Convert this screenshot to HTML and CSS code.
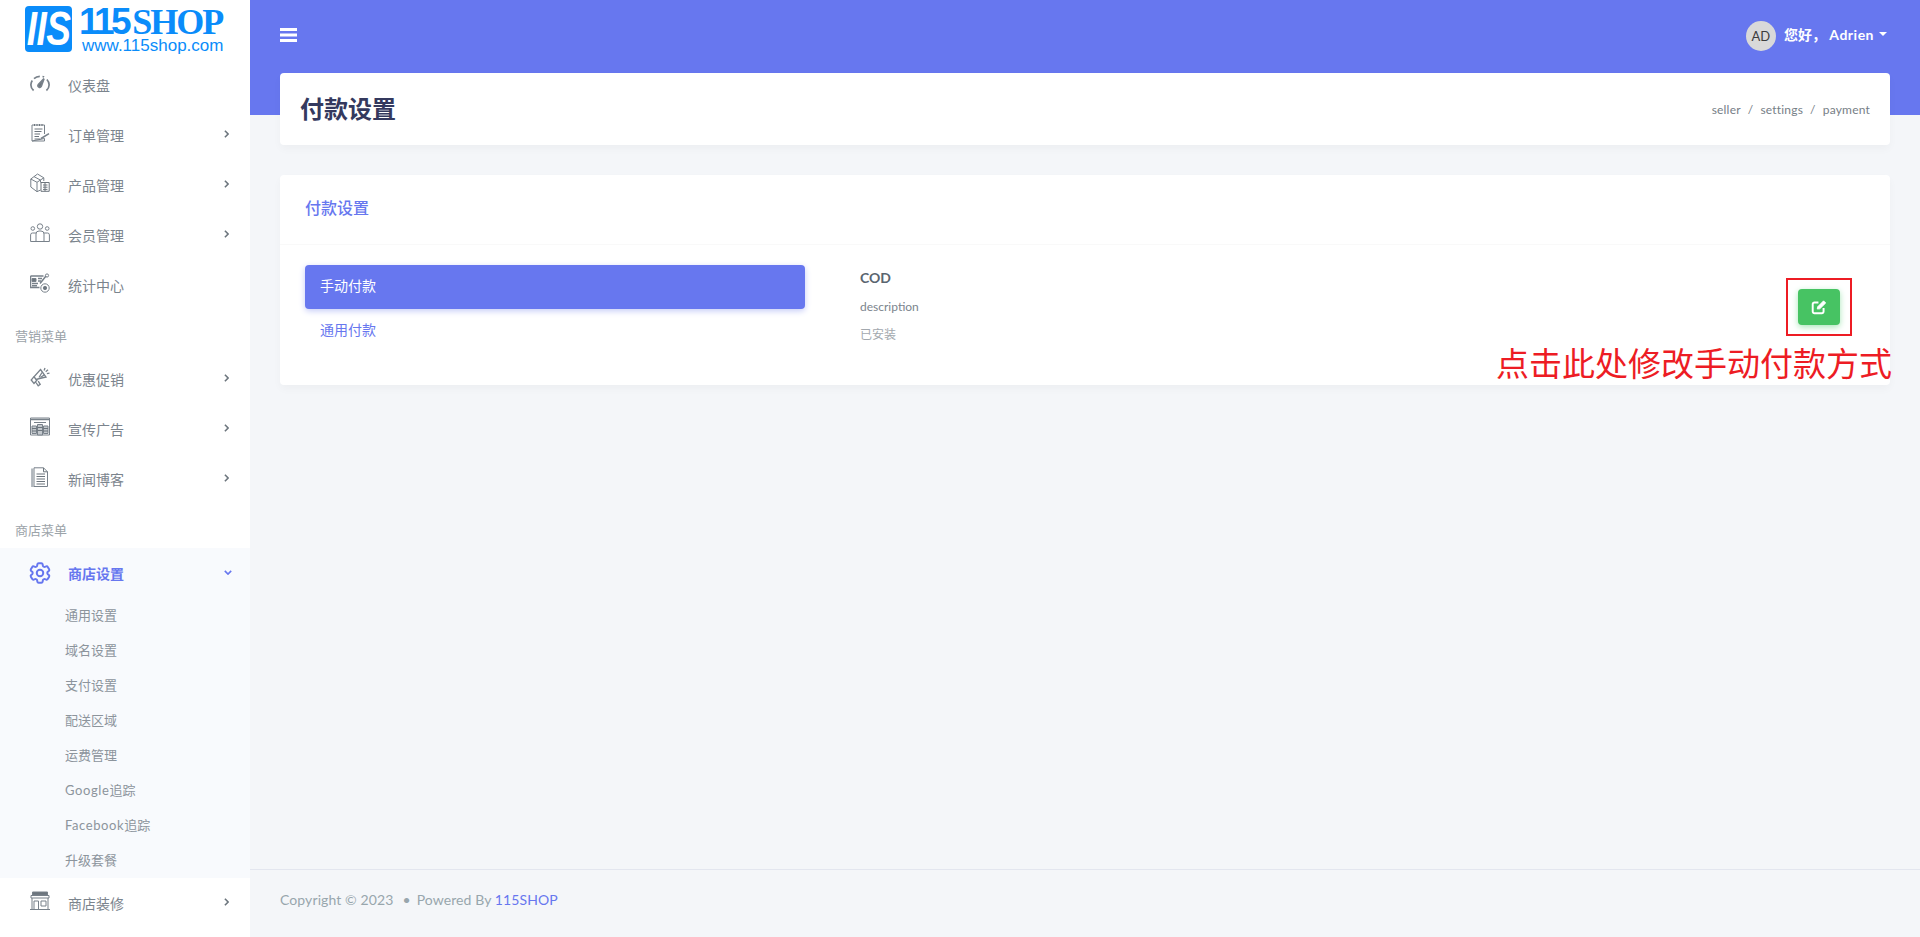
FILE: index.html
```html
<!DOCTYPE html>
<html lang="zh">
<head>
<meta charset="utf-8">
<title>付款设置</title>
<link rel="stylesheet" href="styles.css">
</head>
<body>
<div class="app">
  <aside class="sidebar">
    <div class="brand">
      <span class="brand-mark"><span class="brand-mark-text">IIS</span></span>
      <span class="brand-words">
        <span class="brand-name"><span class="brand-num">115</span><span class="brand-shop">SHOP</span></span>
        <span class="brand-url">www.115shop.com</span>
      </span>
    </div>
    <nav class="menu">
      <a class="item"><svg class="ico ico-gauge" viewBox="0 0 20 20"><path d="M3.600 17.500C1.700 15.800.8 13.900.9 11.600c.1-1.500.6-2.900 1.400-4"/><path d="M4 5.700C5.500 4.300 7.500 3.400 9.800 3.300M12.500 3.500c.6.100 1.100.3 1.600.6"/><path d="M16.900 6.500c1.300 1.400 2.100 3.100 2.200 5.100.1 2.300-.8 4.200-2.700 5.900"/><path d="M8.300 11.600 14 5.600l-2.800 7.800a1.700 1.700 0 0 1-2.900-1.800z" class="fill"/></svg><span class="label">仪表盘</span></a>
      <a class="item"><svg class="ico" viewBox="0 0 20 20"><path d="M2 2h12.500v9M14.500 15.500V18H2zM2 2v16"/><path d="M4.500 1v2M7 1v2M9.500 1v2M12 1v2M4.500 6h8M4.500 8.500h7M4.500 11h5.500M4.500 13.500h4.500M4.500 16h6" class="dark"/><path d="M11 15.500l8-4.800" class="thick"/></svg><span class="label">订单管理</span><svg class="chev" viewBox="0 0 6 10"><path d="M1 1l4 4-4 4"/></svg></a>
      <a class="item"><svg class="ico" viewBox="0 0 20 20"><path d="M.8 6l6.700-5 6.300 3.800L7 9.300zM.8 6v8l6.200 4.700V9.300M13.800 4.800V8M7 18.700l3.500-1.700"/><path d="M4 3.600l6.500 3.500v2.500"/><path d="M11 9.500h8.200v8.800H11zM13 12h4.500M13 14.200h4.500M13 16.400h4.500M15 9.500v8.800" class="dark"/></svg><span class="label">产品管理</span><svg class="chev" viewBox="0 0 6 10"><path d="M1 1l4 4-4 4"/></svg></a>
      <a class="item"><svg class="ico" viewBox="0 0 20 20"><circle cx="10" cy="3.500" r="2.700"/><circle cx="2.800" cy="5.500" r="1.800"/><circle cx="17.200" cy="5.500" r="1.800"/><path d="M6 18.500v-7.500a3 3 0 0 1 3-3h2a3 3 0 0 1 3 3v7.500zM6 10H2.500A1.900 1.900 0 0 0 .6 11.900v6.600H6M14 10h3.500a1.900 1.900 0 0 1 1.900 1.900v6.600H14"/></svg><span class="label">会员管理</span><svg class="chev" viewBox="0 0 6 10"><path d="M1 1l4 4-4 4"/></svg></a>
      <a class="item"><svg class="ico" viewBox="0 0 20 20"><path d="M.5 3h13M.5 3v11.500h9" class="thick"/><path d="M2 5.500h4v3H2z" class="fill"/><path d="M2 10.500h6M2 12.700h5M8 5.500h4M8 8h3" class="thick"/><path d="M10 10.500l6-7.500" class="thick"/><circle cx="17" cy="2.500" r="1.600"/><circle cx="15" cy="15" r="4.200"/><circle cx="15" cy="15" r="1.700" class="fill"/></svg><span class="label">统计中心</span></a>

      <div class="group">营销菜单</div>
      <a class="item"><svg class="ico ico-horn" viewBox="0 0 20 20"><path d="M10.500 2.500l5.500 7.500-10 2.500-2-2.800z"/><path d="M4 9.700 1.200 13 4 16.500l3.500-4M6 15.500l2.200 3.300 2-1.500-2-3.200"/><path d="M12 5.500l-3 5M14 8l-3.500 2.500"/><path d="M15 1l-.9 2.400M18 2.800l-2.300 1.900M19.500 6.200l-2.600.4"/></svg><span class="label">优惠促销</span><svg class="chev" viewBox="0 0 6 10"><path d="M1 1l4 4-4 4"/></svg></a>
      <a class="item"><svg class="ico" viewBox="0 0 20 20"><path d="M.5 1h19v17H.5z"/><path d="M.5 2.500h19" class="thick"/><path d="M4 5.500h12"/><path d="M2 9h4.500v7.500H2zM7.500 7.500h5V18h-5zM13.500 9H18v7.500h-4.500z" class="fill-soft"/><path d="M2 11.500h4.500M2 14h4.500M7.500 10.500h5M7.500 13.500h5M13.500 11.500H18M13.500 14H18" class="dark"/></svg><span class="label">宣传广告</span><svg class="chev" viewBox="0 0 6 10"><path d="M1 1l4 4-4 4"/></svg></a>
      <a class="item"><svg class="ico" viewBox="0 0 20 20"><path d="M4 .8h9.500l4 4V19.500H4z"/><path d="M3.500 2.500H2.200V19.500H4" class="thick-soft"/><path d="M13.500.8v4h4M6.500 7h8.500M6.500 9.500h8.500M6.500 12h8.500M6.500 14.500h8.500M6.500 17h8.500" class="dark"/></svg><span class="label">新闻博客</span><svg class="chev" viewBox="0 0 6 10"><path d="M1 1l4 4-4 4"/></svg></a>

      <div class="group">商店菜单</div>
      <div class="open">
        <a class="item item-active"><svg class="ico ico-gear" viewBox="0 0 24 24"><path d="M9.594 3.940c.09-.542.56-.94 1.110-.94h2.593c.55 0 1.020.398 1.110.94l.213 1.281c.063.374.313.686.645.87.074.04.147.083.22.127.325.196.72.257 1.075.124l1.217-.456a1.125 1.125 0 0 1 1.370.49l1.296 2.247a1.125 1.125 0 0 1-.26 1.431l-1.003.827c-.293.24-.438.613-.431.992a6.759 6.759 0 0 1 0 .255c-.007.378.138.75.43.99l1.005.828c.424.35.534.954.26 1.430l-1.298 2.247a1.125 1.125 0 0 1-1.369.491l-1.217-.456c-.355-.133-.75-.072-1.076.124a6.570 6.570 0 0 1-.22.128c-.331.183-.581.495-.644.869l-.213 1.280c-.09.543-.56.941-1.110.941h-2.594c-.55 0-1.020-.398-1.110-.94l-.213-1.281c-.062-.374-.312-.686-.644-.87a6.520 6.520 0 0 1-.22-.127c-.325-.196-.72-.257-1.076-.124l-1.217.456a1.125 1.125 0 0 1-1.369-.49l-1.297-2.247a1.125 1.125 0 0 1 .26-1.431l1.004-.827c.292-.24.437-.613.43-.992a6.932 6.932 0 0 1 0-.255c.007-.378-.138-.75-.43-.99l-1.004-.828a1.125 1.125 0 0 1-.26-1.430l1.297-2.247a1.125 1.125 0 0 1 1.370-.491l1.216.456c.356.133.751.072 1.076-.124.072-.044.146-.087.22-.128.332-.183.582-.495.644-.869l.214-1.281z"/><circle cx="12" cy="12" r="3"/></svg><span class="label">商店设置</span><svg class="chev chev-down" viewBox="0 0 10 6"><path d="M1 1l4 4 4-4"/></svg></a>
        <a class="sub">通用设置</a>
        <a class="sub">域名设置</a>
        <a class="sub">支付设置</a>
        <a class="sub">配送区域</a>
        <a class="sub">运费管理</a>
        <a class="sub"><span class="sub-en">Google</span>追踪</a>
        <a class="sub"><span class="sub-en">Facebook</span>追踪</a>
        <a class="sub">升级套餐</a>
      </div>
      <a class="item"><svg class="ico" viewBox="0 0 20 20"><path d="M2.500 1h15v3h-15z" class="fill"/><path d="M1 4.500h18v2.500H1zM2 7v11.500h16V7M0 18.500h20M4 10h4.500v8.500H4zM11 10h5v5h-5z"/></svg><span class="label">商店装修</span><svg class="chev" viewBox="0 0 6 10"><path d="M1 1l4 4-4 4"/></svg></a>
    </nav>
  </aside>

  <div class="main">
    <header class="topbar">
      <svg class="burger" viewBox="0 0 17 14"><path d="M0 0h17v3H0zM0 5.500h17v3H0zM0 11h17v3H0z"/></svg>
      <div class="user">
        <span class="avatar">AD</span>
        <span class="hello">您好， <span class="hello-name">Adrien</span></span>
        <span class="caret"></span>
      </div>
    </header>

    <div class="content">
      <section class="page-head">
        <h1 class="page-title">付款设置</h1>
        <div class="crumbs"><span>seller</span><span class="sep">/</span><span>settings</span><span class="sep">/</span><span>payment</span></div>
      </section>

      <section class="card">
        <div class="card-head">付款设置</div>
        <div class="card-body">
          <div class="tabs">
            <a class="tab tab-on">手动付款</a>
            <a class="tab">通用付款</a>
          </div>
          <div class="method">
            <div class="method-text">
              <div class="method-name">COD</div>
              <div class="method-desc">description</div>
              <div class="method-state">已安装</div>
            </div>
            <button class="edit" type="button" aria-label="编辑">
              <svg class="edit-ico" viewBox="0 0 14 14"><path d="M11 7.800V11a1.500 1.500 0 0 1-1.500 1.500H3A1.500 1.500 0 0 1 1.500 11V4.500A1.500 1.500 0 0 1 3 3h3.500"/><path d="M5.500 8.800 5.800 6.800 11 1.600l1.900 1.900-5.200 5.100z" class="edit-pen"/></svg>
            </button>
          </div>
        </div>
        <div class="note-box"></div>
        <div class="note-text">点击此处修改手动付款方式</div>
      </section>
    </div>

    <footer class="foot">Copyright © 2023<span class="dot">•</span>Powered By&nbsp;<a class="foot-link">115SHOP</a></footer>
  </div>
</div>
</body>
</html>
```
FILE: styles.css
```css
* { box-sizing: border-box; }
html, body { margin: 0; height: 100%; }
body {
  font-family: "Lato", "Noto Sans CJK SC", sans-serif;
  font-size: 14px;
  color: #6c757d;
  background: #f4f6f9;
  overflow: hidden;
}
a { color: inherit; text-decoration: none; }
.app { display: flex; height: 937px; }

/* sidebar */
.sidebar { width: 250px; flex: none; background: #fff; overflow: hidden; }
.brand { height: 60px; display: flex; padding: 6px 0 0 25px; gap: 7px; color: #0a8cfa; }
.brand-mark {
  width: 47px; height: 46px; flex: none; border-radius: 4px; background: #0a8cfa; color: #fff;
  display: flex; justify-content: center;
}
.brand-mark-text {
  display: block; font: italic 700 37px/46px "Liberation Sans", sans-serif;
  letter-spacing: -.5px; transform: scaleY(1.3);
}
.brand-words { display: flex; flex-direction: column; }
.brand-name { display: flex; align-items: baseline; height: 31px; line-height: 31px; white-space: nowrap; }
.brand-num { font: 700 37px/31px "Liberation Sans", sans-serif; letter-spacing: -3.500px; }
.brand-shop { font: 700 36px/31px "Liberation Serif", serif; margin-left: 4px; letter-spacing: -2px; }
.brand-url { font: 17px/17px "Liberation Sans", sans-serif; margin-left: 3px; white-space: nowrap; }

.item { height: 50px; display: flex; align-items: center; padding-left: 30px; color: #7b848d; position: relative; }
.label { margin-left: 18px; padding-top: 2px; line-height: 20px; }
.ico {
  width: 20px; height: 20px; flex: none; margin-bottom: 4px;
  fill: none; stroke: #78818a; stroke-width: 1;
}
.ico .fill { fill: #6c757d; }
.ico .fill-soft { fill: #c3c8cd; }
.ico .dark { stroke: #6c757d; }
.ico .thick { stroke-width: 1.500; }
.ico .thick-soft { stroke: #b0b6bc; stroke-width: 2.200; }
.ico-gauge { stroke-width: 1.700; }
.ico-horn { stroke-width: 1.300; }
.chev {
  width: 5px; height: 8px; position: absolute; left: 224px; top: 20px;
  fill: none; stroke: #6c757d; stroke-width: 2;
}
.chev-down { width: 8px; height: 5px; left: 224px; top: 22px; stroke: #6777ef; }
.group { height: 44px; padding: 18px 15px 10px; font-size: 13px; line-height: 16px; color: #9ca3a9; }
.open { background: #f8fafd; height: 330px; }
.item-active { color: #6777ef; font-weight: 700; }
.ico-gear { width: 26px; height: 26px; margin: 0 -3px 0 -3px; stroke: #6777ef; stroke-width: 1.800; }
.sub { display: block; height: 35px; line-height: 35px; padding-left: 65px; font-size: 13px; color: #8c949c; }
.sub-en { letter-spacing: .6px; }

/* main */
.main { flex: 1; display: flex; flex-direction: column; min-width: 0; }
.topbar {
  height: 115px; flex: none; background: #6777ef; padding: 20px 30px 0; color: #fff;
  display: flex; justify-content: space-between; align-items: flex-start;
}
.burger { width: 17px; height: 14px; margin-top: 8px; fill: #fff; }
.user { display: flex; align-items: center; height: 32px; margin-right: 7px; position: relative; left: 0; margin-right: 3px; }
.avatar {
  width: 30px; height: 30px; border-radius: 50%; background: #d9d9d9; color: #3c3c3c;
  font-size: 13px; line-height: 30px; text-align: center;
}
.hello { margin-left: 8px; font-weight: 700; font-size: 14px; line-height: 20px; margin-bottom: 2px; white-space: pre; }
.hello-name { letter-spacing: .5px; }
.caret {
  width: 0; height: 0; margin: 0 0 5px 5px;
  border-left: 4px solid transparent; border-right: 4px solid transparent; border-top: 4px solid #fff;
}
.content { padding: 0 30px; margin-top: -42px; }
.page-head {
  height: 72px; background: #fff; border-radius: 4px; padding: 0 20px;
  box-shadow: 0 4px 8px rgba(0, 0, 0, .03);
  display: flex; justify-content: space-between; align-items: center;
}
.page-title { margin: 0; font-size: 24px; line-height: 32px; font-weight: 700; color: #34395e; }
.crumbs { font-size: 12px; letter-spacing: .2px; color: #767e86; display: flex; gap: 7px; }
.card {
  position: relative; height: 210px; margin-top: 30px; background: #fff; border-radius: 4px;
  box-shadow: 0 4px 8px rgba(0, 0, 0, .03);
}
.card-head {
  height: 70px; padding: 0 25px; line-height: 66px; font-size: 16px; font-weight: 500; color: #6777ef;
  border-bottom: 1px solid #f9f9f9;
}
.card-body { display: flex; padding: 20px 25px 0; gap: 55px; }
.tabs { width: 500px; flex: none; }
.tab { display: block; height: 44px; line-height: 42px; padding: 0 15px; border-radius: 4px; color: #6777ef; }
.tab-on { background: #6777ef; color: #fff; box-shadow: 0 2px 6px #c5cbf7; }
.method { flex: 1; display: flex; justify-content: space-between; padding-right: 25px; }
.method-name { line-height: 26px; font-weight: 700; color: #5a6570; }
.method-desc { margin-top: 4px; line-height: 24px; font-size: 12px; color: #7b848d; }
.method-state { margin-top: 4px; line-height: 24px; font-size: 12px; color: #a2a8ae; }
.edit {
  width: 42px; height: 36px; margin-top: 24px; border: 0; border-radius: 4px; padding: 0;
  background: #47c363; box-shadow: 0 2px 6px #a8e6b8;
  display: flex; align-items: center; justify-content: center;
}
.edit-ico { width: 16px; height: 16px; fill: none; stroke: #fff; stroke-width: 1.700; }
.edit-ico .edit-pen { fill: #fff; stroke: #fff; stroke-width: .7; }

/* annotations over the screenshot */
.note-box { position: absolute; left: 1506px; top: 103px; width: 66px; height: 58px; border: 2px solid #ed1c24; }
.note-text {
  position: absolute; left: 1216px; top: 166px; white-space: nowrap;
  font-size: 33px; line-height: 42px; color: #ed1c24; font-family: "Noto Sans CJK SC", sans-serif; font-weight: 400;
}

.foot {
  margin-top: auto; height: 68px; border-top: 1px solid #e3e6ef; padding: 0 30px;
  line-height: 59px; font-size: 14px; letter-spacing: .1px; color: #98a6ad;
}
.dot { margin: 0 6px 0 9px; }
.foot-link { color: #6777ef; }
```
